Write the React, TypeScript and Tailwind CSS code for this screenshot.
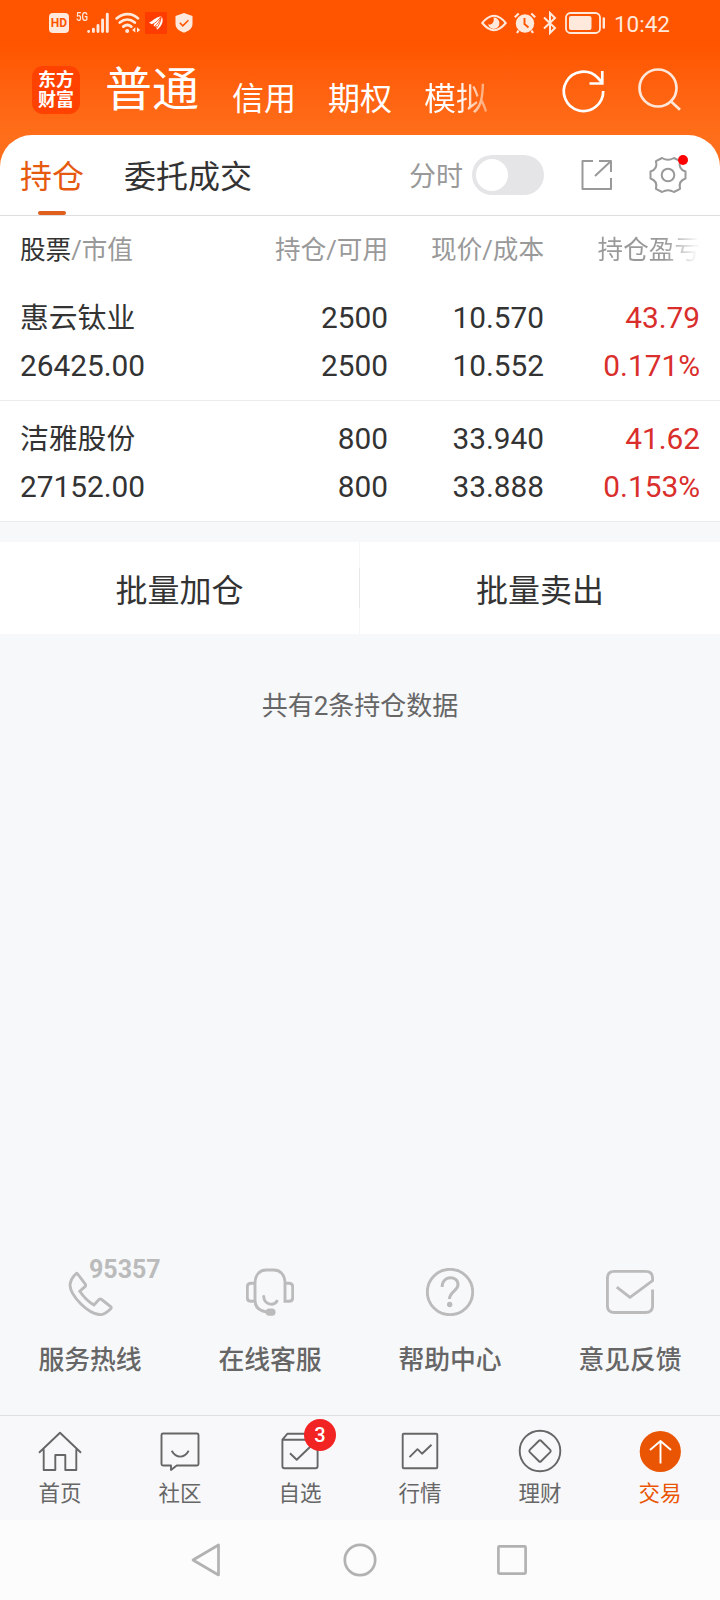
import type { ReactNode } from "react";

type Holding = {
  name: string;
  /** Market value of the position. */
  value: string;
  amount: string;
  available: string;
  price: string;
  cost: string;
  profit: string;
  rate: string;
};

const holdings: Holding[] = [
  {
    name: "惠云钛业",
    value: "26425.00",
    amount: "2500",
    available: "2500",
    price: "10.570",
    cost: "10.552",
    profit: "43.79",
    rate: "0.171%",
  },
  {
    name: "洁雅股份",
    value: "27152.00",
    amount: "800",
    available: "800",
    price: "33.940",
    cost: "33.888",
    profit: "41.62",
    rate: "0.153%",
  },
];

function StatusBar() {
  return (
    <div className="flex h-[46px] items-center pl-[49px] pr-[49px] text-[#ffe9dd]">
      <span className="flex h-[20px] w-[20px] items-center justify-center rounded-[4px] bg-[#ffe9dd] text-[12px] font-bold leading-none text-[#ff5500]">
        HD
      </span>
      <span className="ml-[7px] mb-[13px] w-[11px] origin-left scale-x-[0.8] text-[12px] font-medium leading-none">5G</span>
      <svg className="h-[22px] w-[22px]" viewBox="0 0 22 22" fill="none" stroke="currentColor" strokeWidth="2.9" strokeLinecap="round">
        <path d="M1.6 19.5v.1M6.4 17.3v2.3M11 13.4v6.2M15.6 8v11.6M20.3 2.2v17.4" />
      </svg>
      <svg className="ml-[6px] h-[22px] w-[26px]" viewBox="0 0 26 22" fill="none" stroke="currentColor" strokeWidth="2.7" strokeLinecap="round">
        <path d="M1.6 6.4c6.5-5.8 15.8-5.8 21.4 0M4.8 10.6c4.6-4 10.4-4 15 0M8.3 14.6c2.5-2 5.5-2 8 0" />
        <circle cx="12.2" cy="19" r="2" fill="currentColor" stroke="none" />
        <path d="M20.3 15.3v5.2l-3.2-2.6zM22 15.3v5.2l3.2-2.6z" fill="currentColor" stroke="none" />
      </svg>
      <svg className="ml-[4px] h-[22px] w-[22px]" viewBox="0 0 22 22">
        <path d="M0 0h22v22H0z" fill="#ff3c00" />
        <path
          d="M4 10.8C7.5 9 10.500 5.500 15.500 4.300L17 5c1.500 4 .5 8.500-4.700 12.500l-1.300-1 1-2.500-2.200.8-1.300-1.200 1-1.800-2.700.5z"
          fill="#fff"
        />
        <path d="M7.300 12.300C11 11 13.500 8 15.800 4.600M9.300 14.700c3.500-2.400 5.700-6 6.700-9.900M11.300 16.800c2.700-3.700 4.500-7.500 4.900-12" fill="none" stroke="#ff3c00" strokeWidth=".8" />
      </svg>
      <svg className="ml-[8px] h-[22px] w-[18px]" viewBox="0 0 18 22">
        <path d="M9 1l8.5 3v8c0 4.5-4 7-8.500 8.800C4.500 19 .5 16.500.5 12V4z" fill="currentColor" />
        <path d="M4.800 10.800l3 3 5.600-5.500" fill="none" stroke="#ff5500" strokeWidth="1.600" />
      </svg>

      <svg className="ml-auto h-[22px] w-[26px]" viewBox="0 0 26 22" fill="none" stroke="currentColor">
        <path d="M1.300 11C5.500 5.800 9 3.800 13 3.800S20.500 5.800 24.700 11C20.500 16.200 17 18.200 13 18.200S5.500 16.200 1.300 11z" strokeWidth="2" />
        <path d="M12.500 5.500a5.700 5.700 0 1 1-5.400 6.700c3 1.600 6.800-1.700 5.400-6.700z" fill="currentColor" stroke="none" />
      </svg>
      <svg className="ml-[7px] h-[22px] w-[22px]" viewBox="0 0 22 22" fill="none">
        <circle cx="11" cy="11.500" r="9.200" fill="currentColor" />
        <path d="M.8 5.200L4.700 1.500M21.200 5.200l-3.900-3.700M4.500 18.500l-1.500 2.500M17.500 18.500l1.500 2.500" stroke="currentColor" strokeWidth="2.200" />
        <path d="M10.500 6v6l4 3.500" stroke="#ff5500" strokeWidth="1.900" />
      </svg>
      <svg className="ml-[7px] h-[24px] w-[14px]" viewBox="0 0 14 24" fill="none" stroke="currentColor" strokeWidth="2">
        <path d="M1 6.500l11 10.500-5 5V2l5 5L1 17.500" />
      </svg>
      <svg className="ml-[8px] h-[24px] w-[42px]" viewBox="0 0 42 24" fill="none">
        <rect x="1" y="2" width="34" height="20" rx="4.500" stroke="currentColor" strokeWidth="1.800" />
        <rect x="4" y="5" width="22.500" height="14" rx="2" fill="currentColor" />
        <path d="M38.800 7.500v9" stroke="currentColor" strokeWidth="2.400" strokeLinecap="round" />
      </svg>
      <span className="ml-[7px] mr-px pt-[2px] text-[22.5px] leading-none">10:42</span>
    </div>
  );
}

function Header() {
  return (
    <div className="flex h-[89px] pl-[32px] pr-[38px]">
      <div className="mt-[20px] grid h-[48px] w-[48px] place-content-center rounded-[11px] bg-[#ff4200] text-center text-[18px] font-bold leading-[20px] text-white">
        <span>东方</span>
        <span>财富</span>
      </div>
      <div className="ml-[25px] flex flex-1 items-start gap-[32px] whitespace-nowrap pt-[20px] text-[32px] leading-[48px] text-white">
        <span className="text-[47px]">普通</span>
        <span className="ml-px mt-[5px] pt-[4px]">信用</span>
        <span className="mt-[5px] pt-[4px]">期权</span>
        <span className="mt-[5px] bg-linear-to-r from-white from-55% to-[#ffa066] bg-clip-text pt-[4px] text-transparent">
          模拟
        </span>
      </div>
      <svg className="mt-[21px] h-[48px] w-[48px]" viewBox="0 0 48 48" fill="none" stroke="#fff" strokeWidth="2.700">
        <path d="M43.200 24A19.700 19.700 0 1 1 37.500 10.500L42 15.500" />
        <path d="M42.300 4v12.500H29.500" />
      </svg>
      <svg className="ml-[26px] mt-[21px] h-[48px] w-[48px]" viewBox="0 0 48 48" fill="none" stroke="#ffe6d8" strokeWidth="2.700">
        <circle cx="24" cy="21" r="18.500" />
        <path d="M36 33.500l10 9.200" />
      </svg>
    </div>
  );
}

function Tabs() {
  return (
    <div className="flex h-[81px] items-center border-b border-[#dedede] px-[20px] text-[32px] text-[#333]">
      <div className="relative flex h-full items-center text-[#e65a10]">
        <span className="pt-[3px]">持仓</span>
        <span className="absolute bottom-0 left-[18px] h-[4px] w-[28px] rounded-full bg-[#e05f1d]" />
      </div>
      <span className="ml-[40px] pt-[3px]">委托成交</span>
      <span className="ml-auto pt-[4px] text-[27px] text-[#999]">分时</span>
      <span className="ml-[9px] h-[40px] w-[72px] rounded-full bg-[#e5e5e7] p-[4px]">
        <span className="block h-[32px] w-[32px] rounded-full bg-white" />
      </span>
      <svg className="ml-[37px] h-[32px] w-[32px]" viewBox="0 0 32 32" fill="none" stroke="#999" strokeWidth="2">
        <path d="M12 2H1.500v28H30V19M18 2h12v11M30 2L14 17" strokeLinejoin="round" />
      </svg>
      <div className="relative ml-[35px] mr-[12px]">
        <svg className="h-[40px] w-[40px]" viewBox="-20 -20 40 40" fill="none" stroke="#999" strokeWidth="2" strokeLinejoin="round">
          <path d="M17.500-3.500V3.500Q10 6 12.030 13.840L5.970 17Q0 13.500-5.970 17L-12.030 13.840Q-10 6-17.500 3.500V-3.500Q-10-6-12.030-13.840L-5.970-17Q0-13.500 5.970-17L12.030-13.840Q10-6 17.500-3.500z" />
          <circle r="6.300" />
        </svg>
        <span className="absolute right-0 top-0 h-[10px] w-[10px] rounded-full bg-[#f00]" />
      </div>
    </div>
  );
}

function Cell({ top, bottom, className = "" }: { top: string; bottom: string; className?: string }) {
  return (
    <div className={`flex flex-col text-right leading-[48px] ${className}`}>
      <span>{top}</span>
      <span>{bottom}</span>
    </div>
  );
}

const columns = "grid grid-cols-[221px_147px_156px_156px] pl-[20px]";

function HoldingsTable() {
  return (
    <div>
      <div className={`${columns} h-[64px] items-center pt-[3px] text-right text-[25.6px] leading-[40px] text-[#999]`}>
        <span className="text-left">
          <span className="text-[#333]">股票</span>/市值
        </span>
        <span>持仓/可用</span>
        <span>现价/成本</span>
        <span className="ml-auto bg-linear-to-r from-[#999] from-65% to-[#f4f4f4] to-95% bg-clip-text text-transparent">
          持仓盈亏
        </span>
      </div>
      {holdings.map((item) => (
        <div
          key={item.name}
          className={`${columns} h-[121px] border-b border-[#ebecee] pt-[14px] text-[29.8px] text-[#333]`}
        >
          <div className="flex flex-col leading-[48px]">
            <span className="text-[28.8px]">{item.name}</span>
            <span>{item.value}</span>
          </div>
          <Cell top={item.amount} bottom={item.available} />
          <Cell top={item.price} bottom={item.cost} />
          <Cell top={item.profit} bottom={item.rate} className="text-[#d92e2b]" />
        </div>
      ))}
    </div>
  );
}

const services: { label: string; icon: ReactNode }[] = [
  {
    label: "服务热线",
    icon: (
      <path d="M11.300 5.500L19.500 16.500Q20 17.700 19 18.700L13.800 23.200Q20 32.500 28 37L33 31.600Q34 30.500 35.300 31.300L44.600 38.500Q45.700 39.600 44.700 40.700Q39 46.500 34.300 46.700C22 46 4.500 28 4 17Q4.500 11 10 5.700Q10.700 5 11.300 5.500z" />
    ),
  },
  {
    label: "在线客服",
    icon: (
      <>
        <path d="M9 33.300H5q-3.700 0-3.700-3.700V19q0-3.700 3.700-3.700h4M39 15.300h4q3.700 0 3.700 3.700v10.600q0 3.700-3.700 3.700h-4V15.300C39 6.500 34 2 28 2h-8C14 2 9 6.500 9 15.300V32c0 6.500 4 11 11.500 12" />
        <path d="M17.700 28.500c.6 8.300 9.500 10 13.300 4.600" strokeLinecap="round" />
        <rect x="19.700" y="40.500" width="9.800" height="7.200" rx="3.500" fill="#bbb" stroke="none" />
      </>
    ),
  },
  {
    label: "帮助中心",
    icon: (
      <>
        <circle cx="24" cy="24" r="22.700" />
        <path d="M16.200 19c-.5-12 16.200-12 15.800-2-.3 6-8.500 6.500-8.500 14" strokeWidth="3" />
        <circle cx="23.700" cy="36.500" r="2.700" fill="#bbb" stroke="none" />
      </>
    ),
  },
  {
    label: "意见反馈",
    icon: (
      <path d="M46.600 21.500v16q0 7-7 7H8.400q-7 0-7-7V10.400q0-7 7-7h31.200q7 0 7 7v2.200L24 29.300 10.800 19.200" strokeLinejoin="round" />
    ),
  },
];

function Services() {
  return (
    <div className="mt-auto grid grid-cols-4 pb-[35px]">
      {services.map(({ label, icon }) => (
        <div key={label} className="relative flex flex-col items-center">
          <svg className="h-[48px] w-[48px]" viewBox="0 0 48 48" fill="none" stroke="#bbb" strokeWidth="2.900">
            {icon}
          </svg>
          {label === "服务热线" && (
            <span className="absolute -top-[10px] left-[89px] text-[25px] font-bold leading-[24px] text-[#bbb]">95357</span>
          )}
          <span className="mt-[24px] text-[25.8px] font-medium leading-[40px] text-[#666]">{label}</span>
        </div>
      ))}
    </div>
  );
}

const tabs: { label: string; icon: ReactNode; badge?: number; active?: boolean }[] = [
  {
    label: "首页",
    icon: <path d="M3 25.700l21-20 21 20M7.700 22.300V43h11.600V28h10v15h11V22.300" />,
  },
  {
    label: "社区",
    icon: (
      <>
        <path d="M7 6.500h34q1.500 0 1.500 1.500v29q0 1.500-1.500 1.500H20.700L15 43v-4.500H7q-1.500 0-1.500-1.500V8q0-1.500 1.500-1.500z" />
        <path d="M15.700 23.800c4.500 7.800 12.500 7.800 17 0" />
      </>
    ),
  },
  {
    label: "自选",
    badge: 3,
    icon: (
      <>
        <path d="M6.400 12.700h35.200M6.400 12.700L11.500 6.700H38l3.600 6v26.500q0 2-2 2H8.400q-2 0-2-2z" />
        <path d="M14 26.300l6.700 6.500L35 19" />
      </>
    ),
  },
  {
    label: "行情",
    icon: (
      <>
        <rect x="6.700" y="6.700" width="34.600" height="34.600" rx="1" />
        <path d="M13.500 30.200l8-8 4.500 4.500 9.500-9" />
      </>
    ),
  },
  {
    label: "理财",
    icon: (
      <>
        <circle cx="24" cy="24" r="20.300" />
        <rect x="16" y="16" width="16" height="16" rx="1.500" transform="rotate(45 24 24)" />
      </>
    ),
  },
  {
    label: "交易",
    active: true,
    icon: (
      <>
        <circle cx="24.300" cy="24.500" r="20.600" fill="#ea5504" stroke="none" />
        <path d="M24.500 36.500V14.500M14 23l10.500-9L35 23" stroke="#fff" />
      </>
    ),
  },
];

function TabBar() {
  return (
    <div className="grid h-[105px] grid-cols-6 border-t border-[#dfe2e5] bg-[#f8f8fa] pt-[11px]">
      {tabs.map(({ label, icon, badge, active }) => (
        <div key={label} className="relative flex flex-col items-center">
          <svg className="h-[48px] w-[48px]" viewBox="0 0 48 48" fill="none" stroke="#666" strokeWidth="1.900" strokeLinejoin="round">
            {icon}
          </svg>
          {badge && (
            <span className="absolute -top-[8px] left-[64px] flex h-[32px] w-[32px] items-center justify-center rounded-full bg-[#f22323] text-[20px] font-medium text-white">
              {badge}
            </span>
          )}
          <span className={`mt-[4px] text-[21.5px] leading-[30px] ${active ? "text-[#ea5504]" : "text-[#666]"}`}>
            {label}
          </span>
        </div>
      ))}
    </div>
  );
}

function SystemNav() {
  return (
    <div className="flex h-[80px] items-center justify-center gap-[112px] bg-[#fcfcfc]">
      <svg className="h-[40px] w-[40px]" viewBox="0 0 40 40" fill="none" stroke="#b2b2b2" strokeWidth="2.700" strokeLinejoin="round">
        <path d="M5 20L30.500 5v30z" />
      </svg>
      <svg className="h-[40px] w-[40px]" viewBox="0 0 40 40" fill="none" stroke="#b2b2b2" strokeWidth="2.700">
        <circle cx="20" cy="20" r="15.200" />
      </svg>
      <svg className="h-[40px] w-[40px]" viewBox="0 0 40 40" fill="none" stroke="#b2b2b2" strokeWidth="2.700">
        <rect x="6.400" y="6.400" width="27.200" height="27.200" rx="1" />
      </svg>
    </div>
  );
}

export default function App() {
  return (
    <div className="flex h-[1600px] w-[720px] flex-col overflow-hidden bg-[#f7f8fa] font-[Roboto,'Noto_Sans_CJK_SC',sans-serif]">
      <div className="bg-linear-to-b from-[#ff5500] from-[45px] to-[#ff6e1a] to-[135px]">
        <StatusBar />
        <Header />
        <div className="rounded-t-[32px] bg-white">
          <Tabs />
          <HoldingsTable />
        </div>
      </div>

      <div className="mt-[20px] flex h-[92px] items-center bg-white text-[32px] text-[#333]">
        <span className="w-[359px] pt-[5px] text-center">批量加仓</span>
        <span className="flex h-full w-px items-center bg-[#f5f6f7]">
          <span className="h-[40px] w-px bg-[#e8e8e8]" />
        </span>
        <span className="flex-1 pt-[5px] text-center">批量卖出</span>
      </div>
      <p className="mt-[52px] text-center text-[26px] leading-[40px] text-[#666]">共有2条持仓数据</p>

      <Services />
      <TabBar />
      <SystemNav />
    </div>
  );
}
